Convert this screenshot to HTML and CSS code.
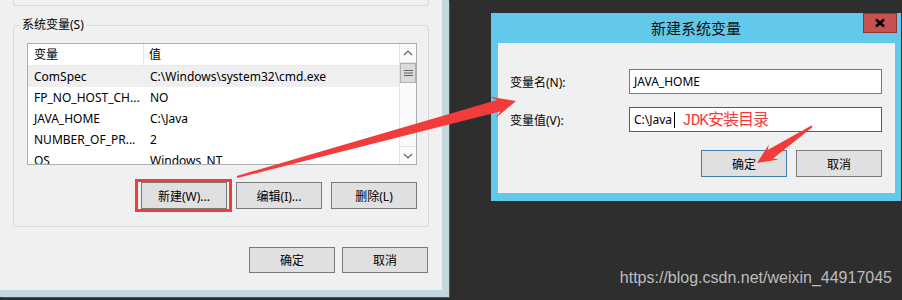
FILE: index.html
```html
<!DOCTYPE html>
<html>
<head>
  <title>新建系统变量</title>
  <link rel="stylesheet" href="styles.css">
</head>
<body>

  <div class="win">
    <div class="group-prev"></div>

    <fieldset class="group">
      <legend>系统变量(S)</legend>
      <div class="list">
        <div class="list-body">
          <div class="row head"><span class="c1">变量</span><span class="c2">值</span></div>
          <div class="row sel"><span class="c1">ComSpec</span><span class="c2">C:\Windows\system32\cmd.exe</span></div>
          <div class="row"><span class="c1">FP_NO_HOST_CH...</span><span class="c2">NO</span></div>
          <div class="row"><span class="c1">JAVA_HOME</span><span class="c2">C:\Java</span></div>
          <div class="row"><span class="c1">NUMBER_OF_PR...</span><span class="c2">2</span></div>
          <div class="row"><span class="c1">OS</span><span class="c2">Windows_NT</span></div>
        </div>
        <div class="scroll">
          <div class="sb-btn">
            <svg width="10" height="6" viewBox="0 0 10 6"><polyline points="1,5 5,1 9,5" fill="none" stroke="#606060" stroke-width="1.2"/></svg>
          </div>
          <div class="sb-thumb">
            <svg width="9" height="8" viewBox="0 0 9 8"><path d="M0 1.5h9M0 4h9M0 6.5h9" stroke="#606060" stroke-width="1.2"/></svg>
          </div>
          <div class="sb-track"></div>
          <div class="sb-btn down">
            <svg width="10" height="6" viewBox="0 0 10 6"><polyline points="1,1 5,5 9,1" fill="none" stroke="#606060" stroke-width="1.2"/></svg>
          </div>
        </div>
      </div>
      <div class="btn-row">
        <button>新建(W)...</button>
        <button>编辑(I)...</button>
        <button>删除(L)</button>
      </div>
    </fieldset>

    <div class="btn-row foot">
      <button class="small">确定</button>
      <button class="small">取消</button>
    </div>
  </div>

  <div class="dialog">
    <div class="titlebar">
      <span></span>
      <span class="title">新建系统变量</span>
      <span class="close">
        <svg width="34" height="20" viewBox="0 0 34 20"><path d="M13 6.5L21 13.5M21 6.5L13 13.5" stroke="#000" stroke-width="2.6"/></svg>
      </span>
    </div>
    <div class="dialog-body">
      <div class="field-row">
        <label>变量名(N):</label>
        <div class="field">JAVA_HOME</div>
      </div>
      <div class="field-row">
        <label>变量值(V):</label>
        <div class="field focus">C:\Java<span class="caret"></span><span class="note">JDK安装目录</span></div>
      </div>
      <div class="btn-row dlg">
        <button class="default">确定</button>
        <button>取消</button>
      </div>
    </div>
  </div>

  <div class="watermark">https://blog.csdn.net/weixin_44917045</div>

  <svg class="marks" width="902" height="300" viewBox="0 0 902 300">
    <rect x="136.5" y="180.5" width="94" height="30" fill="none" stroke="#f23c3c" stroke-width="3"/>
    <polygon fill="#f23c3c" points="237.3,178 500.2,111.5 495.7,117.9 516,101 490,96.7 497,99.9 236.7,176"/>
    <polygon fill="#f23c3c" points="812.6,127 773.1,158.4 778.7,159.5 757,163 768.8,144.5 767.7,150 811.4,125.4"/>
  </svg>

</body>
</html>
```

FILE: styles.css
```css
* {
  box-sizing: border-box;
}

body {
  margin: 0;
  width: 902px;
  height: 300px;
  overflow: hidden;
  position: relative;
  display: flex;
  align-items: flex-start;
  background: #2e2e2e;
  font-family: "Noto Sans", "Noto Sans CJK SC", sans-serif;
  font-size: 12px;
  color: #000;
}

/* left window: environment variables */
.win {
  width: 449px;
  height: 297px;
  background: #f0f0f0;
  border-right: 7px solid #c3d7de;
  border-bottom: 7px solid #c3d7de;
  box-shadow: 1px 1px 0 #4b5559;
  padding: 0 14px 0 0;
  flex-shrink: 0;
}

.group-prev {
  height: 6px;
  margin: 0 0 0 13px;
  width: 416px;
  border: 1px solid #d9d9d9;
  border-top: none;
  border-radius: 0 0 3px 3px;
}

.group {
  width: 416px;
  margin: 11px 0 0 13px;
  padding: 0 11px 17px 6px;
  border: 1px solid #d9d9d9;
  border-radius: 3px;
}

.group legend {
  padding: 0 2px;
  line-height: 16px;
}

.list {
  width: 390px;
  height: 122px;
  margin: 10px 0 0 7px;
  border: 1px solid #abadb3;
  background: #fff;
  display: flex;
  overflow: hidden;
}

.list-body {
  width: 371px;
}

.row {
  display: flex;
  height: 21px;
  line-height: 21px;
  white-space: nowrap;
}

.row.head {
  height: 22px;
  line-height: 22px;
  border-bottom: 1px solid #eaeaea;
}

.row.sel {
  background: #efefef;
}

.c1 {
  width: 116px;
  padding-left: 6px;
  overflow: hidden;
}

.c2 {
  padding-left: 6px;
}

.head .c1 {
  border-right: 1px solid #e5e5e5;
}

.head .c2 {
  padding-left: 5px;
}

.scroll {
  width: 17px;
  display: flex;
  flex-direction: column;
  background: #fafafa;
  border-left: 1px solid #e3e3e3;
}

.sb-btn {
  height: 19px;
  display: flex;
  align-items: center;
  justify-content: center;
  border-bottom: 1px solid #e3e3e3;
}

.sb-btn.down {
  height: 18px;
  border-bottom: none;
  border-top: 1px solid #e3e3e3;
}

.sb-thumb {
  height: 20px;
  background: #dadada;
  border: 1px solid #b0b0b0;
  display: flex;
  align-items: center;
  justify-content: center;
}

.sb-track {
  flex: 1;
}

.btn-row {
  display: flex;
  justify-content: flex-end;
  gap: 9px;
  margin-top: 17px;
}

button {
  width: 86px;
  height: 27px;
  padding: 0;
  font: inherit;
  color: #000;
  background: #e0e0e0;
  border: 1px solid #7a7a7a;
}

.foot {
  margin-top: 20px;
  gap: 7px;
}

button.small {
  height: 26px;
}

/* right dialog */
.dialog {
  width: 410px;
  margin: 13px 0 0 42px;
  background: #63c9ea;
  flex-shrink: 0;
}

.titlebar {
  height: 30px;
  display: grid;
  grid-template-columns: 1fr auto 1fr;
}

.title {
  font-size: 15px;
  line-height: 30px;
  color: #111;
}

.close {
  justify-self: end;
  align-self: start;
  width: 34px;
  height: 20px;
  margin-right: 4px;
  background: #c75050;
  border: 1px solid #8e3434;
  display: flex;
}

.close svg {
  margin: -1px;
}

.dialog-body {
  width: 397px;
  margin: 0 6px 8px 7px;
  background: #f0f0f0;
  padding: 26px 13px 16px 12px;
}

.field-row {
  display: grid;
  grid-template-columns: 119px 253px;
  align-items: center;
  margin-bottom: 13px;
}

.field {
  height: 25px;
  line-height: 23px;
  padding-left: 4px;
  background: #fff;
  border: 1px solid #7a7a7a;
  white-space: nowrap;
}

.field.focus {
  border-color: #2f659a;
}

.caret {
  display: inline-block;
  width: 1px;
  height: 16px;
  background: #000;
  vertical-align: -4px;
  margin: 0 7px 0 2px;
}

.note {
  font-family: "Liberation Mono", "Noto Sans CJK SC", monospace;
  font-size: 16px;
  letter-spacing: -1px;
  color: #f23c3c;
  vertical-align: -1px;
}

.btn-row.dlg {
  margin-top: 18px;
  padding-right: 0;
}

button.default {
  border-color: #3c7fb1;
}

.watermark {
  position: absolute;
  right: 10px;
  top: 269px;
  font-family: "Liberation Sans", sans-serif;
  font-size: 16px;
  color: #bdbdbd;
}

.marks {
  position: absolute;
  left: 0;
  top: 0;
  pointer-events: none;
}
```
